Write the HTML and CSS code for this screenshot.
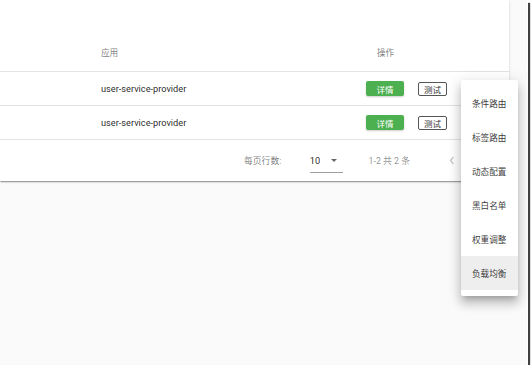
FILE: index.html
```html
<!DOCTYPE html>
<html lang="en">
<head>
    <meta charset="UTF-8">
    <title>路由规则</title>
    <link rel="stylesheet" href="styles.css">
</head>
<body>
    <div class="frame">
        <div class="card">
            <div class="row head">
                <div class="cell app">应用</div>
                <div class="cell ops">操作</div>
            </div>
            <div class="row">
                <div class="cell app">user-service-provider</div>
                <div class="cell ops">
                    <button class="btn detail">详情</button>
                    <button class="btn test">测试</button>
                </div>
            </div>
            <div class="row">
                <div class="cell app">user-service-provider</div>
                <div class="cell ops">
                    <button class="btn detail">详情</button>
                    <button class="btn test">测试</button>
                </div>
            </div>
            <div class="footer">
                <div class="per-page">每页行数:</div>
                <div class="select">
                    <span class="select-value">10</span>
                    <span class="select-arrow"></span>
                </div>
                <div class="range">1-2 共 2 条</div>
                <div class="pager">
                    <svg width="6" height="9" viewBox="0 0 6 9"><path d="M4.5 1 L1.5 4.5 L4.5 8" fill="none" stroke="#c4c4c4" stroke-width="1.2"/></svg>
                </div>
                <div class="pager">
                    <svg width="6" height="9" viewBox="0 0 6 9"><path d="M1.5 1 L4.5 4.5 L1.5 8" fill="none" stroke="#c4c4c4" stroke-width="1.2"/></svg>
                </div>
            </div>
        </div>

        <div class="menu">
            <div class="menu-item">条件路由</div>
            <div class="menu-item">标签路由</div>
            <div class="menu-item">动态配置</div>
            <div class="menu-item">黑白名单</div>
            <div class="menu-item">权重调整</div>
            <div class="menu-item active">负载均衡</div>
        </div>
    </div>
</body>
</html>
```

FILE: styles.css
```css
body {
    margin: 0;
    background: #fff;
    font-family: Roboto, "Noto Sans CJK SC", sans-serif;
    color: rgba(0, 0, 0, 0.87);
    overflow: hidden;
}
.frame {
    position: relative;
    width: 527px;
    height: 365px;
    background: #fafafa;
    box-shadow: 1px 1px 0 #fff, 3px 3px 1px rgba(0, 0, 0, 0.75);
}
.card {
    width: 509px;
    background: #fff;
    box-shadow: 0 2px 1px -1px rgba(0, 0, 0, 0.2), 0 1px 1px 0 rgba(0, 0, 0, 0.14), 0 1px 3px 0 rgba(0, 0, 0, 0.12);
}
.row {
    display: flex;
    align-items: center;
    height: 34px;
    box-sizing: border-box;
    padding-left: 101px;
    border-bottom: 1px solid #e3e3e3;
    font-size: 9.2px;
}
.row.head {
    height: 72px;
    padding-top: 33px;
    font-size: 8.6px;
    color: rgba(0, 0, 0, 0.54);
}
.cell.app {
    width: 265px;
}
.head .cell.ops {
    padding-left: 11px;
}
.cell.ops {
    display: flex;
    align-items: center;
}
.btn {
    font-family: Roboto, "Noto Sans CJK SC", sans-serif;
    font-size: 8.5px;
    padding: 0;
    cursor: pointer;
    border-radius: 2px;
    box-sizing: border-box;
}
.btn.detail {
    width: 38px;
    height: 15px;
    background: #4caf50;
    color: #fff;
    border: none;
    box-shadow: 0 1px 2px rgba(0, 0, 0, 0.2);
}
.btn.test {
    width: 29px;
    height: 14px;
    margin-left: 14px;
    background: #fff;
    color: #333;
    border: 1px solid #555;
}
.footer {
    display: flex;
    align-items: center;
    height: 41px;
    padding-left: 244px;
    font-size: 8.8px;
    color: rgba(0, 0, 0, 0.54);
}
.per-page {
    width: 66px;
}
.select {
    display: flex;
    align-items: center;
    width: 33px;
    height: 20px;
    margin-top: 4px;
    box-sizing: border-box;
    border-bottom: 1px solid #9e9e9e;
    color: rgba(0, 0, 0, 0.87);
    font-size: 9.2px;
    padding-bottom: 3px;
}
.select-value {
    flex: 1;
}
.select-arrow {
    width: 0;
    height: 0;
    margin-right: 6px;
    border-left: 3px solid transparent;
    border-right: 3px solid transparent;
    border-top: 3px solid #666;
}
.range {
    width: 81px;
    margin-left: 26px;
    color: rgba(0, 0, 0, 0.45);
}
.pager {
    display: flex;
    width: 30px;
}
.menu {
    position: absolute;
    top: 80px;
    left: 461px;
    width: 57px;
    padding: 6px 0;
    background: #fff;
    border-radius: 2px;
    box-shadow: 0 5px 5px -3px rgba(0, 0, 0, 0.2), 0 8px 10px 1px rgba(0, 0, 0, 0.14), 0 3px 14px 2px rgba(0, 0, 0, 0.12);
}
.menu-item {
    display: flex;
    align-items: center;
    height: 34px;
    padding-left: 11px;
    font-size: 8.6px;
    color: rgba(0, 0, 0, 0.8);
}
.menu-item.active {
    background: #eee;
}
```
